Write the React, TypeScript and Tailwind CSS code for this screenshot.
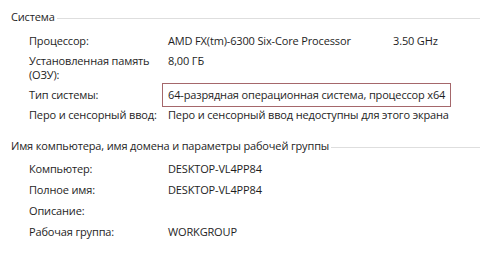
import React from 'react';

interface Row {
  label: string[];
  value?: string;
  extra?: string;
  boxed?: boolean;
}

const systemRows: Row[] = [
  { label: ['Процессор:'], value: 'AMD FX(tm)-6300 Six-Core Processor', extra: '3.50 GHz' },
  { label: ['Установленная память', '(ОЗУ):'], value: '8,00 ГБ' },
  { label: ['Тип системы:'], value: '64-разрядная операционная система, процессор x64', boxed: true },
  { label: ['Перо и сенсорный ввод:'], value: 'Перо и сенсорный ввод недоступны для этого экрана' },
];

const computerRows: Row[] = [
  { label: ['Компьютер:'], value: 'DESKTOP-VL4PP84' },
  { label: ['Полное имя:'], value: 'DESKTOP-VL4PP84' },
  { label: ['Описание:'] },
  { label: ['Рабочая группа:'], value: 'WORKGROUP' },
];

const SectionHeader: React.FC<{ title: string }> = ({ title }) => (
  <div className="flex items-center h-[14px]">
    <span className="whitespace-nowrap">{title}</span>
    <div className="flex-1 h-px bg-[#dedede] ml-[2px] mt-[3px]" />
  </div>
);

const InfoRows: React.FC<{ rows: Row[]; gap: string }> = ({ rows, gap }) => (
  <div className={`flex flex-col pl-[18px] ${gap}`}>
    {rows.map((row, i) => (
      <div key={i} className="flex items-start">
        <div className="w-[139px] shrink-0 whitespace-nowrap">
          {row.label.map((l, j) => (
            <div key={j}>{l}</div>
          ))}
        </div>
        {row.boxed ? (
          <div className="-ml-[6px] -my-[5px] px-[5px] py-[4px] border border-[#a5676b] whitespace-nowrap">
            {row.value}
          </div>
        ) : (
          <div className="w-[225px] shrink-0 whitespace-nowrap">{row.value}</div>
        )}
        {row.extra && <div className="whitespace-nowrap">{row.extra}</div>}
      </div>
    ))}
  </div>
);

export default function App() {
  return (
    <div
      className="w-[480px] h-[267px] bg-white text-[#1e1e1e] text-[11px] tracking-[-0.15px] leading-[14px] pl-[11px] pt-[10px] overflow-hidden"
      style={{ fontFamily: '"Open Sans", "Noto Sans", sans-serif' }}
    >
      <SectionHeader title="Система" />
      <div className="mt-[10px]">
        <InfoRows rows={systemRows} gap="gap-[6px]" />
      </div>
      <div className="mt-[17px]">
        <SectionHeader title="Имя компьютера, имя домена и параметры рабочей группы" />
      </div>
      <div className="mt-[9px]">
        <InfoRows rows={computerRows} gap="gap-[7px]" />
      </div>
    </div>
  );
}
